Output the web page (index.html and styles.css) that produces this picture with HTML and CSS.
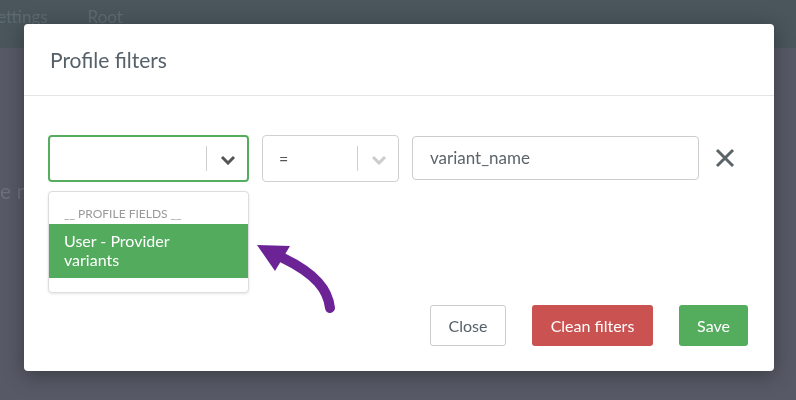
FILE: index.html
```html
<!DOCTYPE html>
<html lang="en">
<head>
    <meta charset="UTF-8">
    <meta name="viewport" content="width=device-width, initial-scale=1.0">
    <title>Profile filters</title>
    <link rel="stylesheet" href="styles.css">
</head>
<body>

    <div class="page">
        <div class="topbar">
            <span class="nav-item">Settings</span>
            <span class="nav-item">Root</span>
        </div>
        <div class="page-body">
            <p class="page-text">The new</p>
        </div>
    </div>

    <div class="overlay">
        <div class="modal">
            <div class="modal-header">
                <h4>Profile filters</h4>
            </div>
            <div class="modal-body">
                <div class="filter-row">
                    <div class="select select-field is-focused">
                        <div class="select-value"></div>
                        <span class="select-sep"></span>
                        <span class="select-arrow">
                            <svg width="16" height="10" viewBox="0 0 16 10"><path d="M2 2l6 6 6-6" fill="none" stroke="#555" stroke-width="3"/></svg>
                        </span>
                        <div class="menu">
                            <div class="menu-group">__ PROFILE FIELDS __</div>
                            <div class="menu-option is-selected">User - Provider variants</div>
                        </div>
                    </div>
                    <div class="select select-op">
                        <div class="select-value">=</div>
                        <span class="select-sep"></span>
                        <span class="select-arrow">
                            <svg width="16" height="10" viewBox="0 0 16 10"><path d="M2 2l6 6 6-6" fill="none" stroke="#ccc" stroke-width="3"/></svg>
                        </span>
                    </div>
                    <input type="text" class="value-input" value="variant_name">
                    <button class="remove" aria-label="Remove">
                        <svg width="20" height="20" viewBox="0 0 20 20"><path d="M2 2l16 16M18 2L2 18" stroke="#5b6469" stroke-width="3"/></svg>
                    </button>
                </div>

                <svg class="hint-arrow" width="100" height="90" viewBox="0 0 100 90">
                    <path d="M80 72C78 54 66 38 33 22" fill="none" stroke="#6b2396" stroke-width="10" stroke-linecap="round"/>
                    <path d="M7 9L40 10L25 35Z" fill="#6b2396"/>
                </svg>
            </div>
            <div class="modal-footer">
                <button class="btn btn-default">Close</button>
                <button class="btn btn-danger">Clean filters</button>
                <button class="btn btn-success">Save</button>
            </div>
        </div>
    </div>

</body>
</html>
```

FILE: styles.css
```css
body {
    margin: 0;
    font-family: Lato, "Open Sans", sans-serif;
    background-color: #575a66;
    height: 400px;
    overflow: hidden;
}
.page {
    height: 400px;
    display: flex;
    flex-direction: column;
}
.topbar {
    height: 48px;
    background-color: #4a565c;
    display: flex;
    gap: 40px;
    margin-left: -12px;
    align-items: flex-start;
}
.nav-item {
    color: #5d6a70;
    font-size: 17px;
    padding-top: 6px;
    filter: blur(0.6px);
}
.page-body {
    flex: 1;
    background-color: #575a66;
}
.page-text {
    margin: 130px 0 0 -24px;
    font-size: 21px;
    color: #6d707b;
    filter: blur(0.6px);
}
.overlay {
    position: fixed;
    inset: 0;
    padding: 24px 22px 0 24px;
}
.modal {
    position: relative;
    background: #fff;
    width: 750px;
    border-radius: 4px;
    box-shadow: 0 4px 20px rgba(0, 0, 0, 0.35);
}
.modal-header {
    height: 72px;
    border-bottom: 1px solid #e5e5e5;
    box-sizing: border-box;
    padding: 0 26px;
    display: flex;
    align-items: center;
}
.modal-header h4 {
    margin: 0;
    font-size: 21px;
    font-weight: normal;
    color: #56616a;
}
.modal-body {
    padding: 39px 24px 0 24px;
    height: 209px;
    box-sizing: border-box;
}
.filter-row {
    display: flex;
    align-items: center;
}
.select {
    position: relative;
    display: flex;
    align-items: center;
    height: 47px;
    box-sizing: border-box;
    border: 1px solid #d0d0d0;
    border-radius: 4px;
}
.select-field {
    width: 201px;
    margin-right: 13px;
}
.select-field.is-focused {
    border: 2px solid #57ad5f;
}
.select-op {
    width: 137px;
    margin-right: 13px;
}
.select-value {
    flex: 1;
    padding-left: 16px;
    font-size: 16px;
    color: #555;
}
.select-sep {
    width: 1px;
    height: 25px;
    background-color: #cfcfcf;
}
.select-arrow {
    box-sizing: border-box;
    width: 40px;
    display: flex;
    justify-content: center;
    padding: 2px 0 0 2px;
}
.menu {
    position: absolute;
    top: 54px;
    left: -2px;
    width: 201px;
    height: 102px;
    box-sizing: border-box;
    background: #fff;
    border: 1px solid #ddd;
    border-radius: 4px;
    box-shadow: 0 1px 3px rgba(0, 0, 0, 0.1);
    padding-top: 14px;
    z-index: 2;
}
.menu-group {
    font-size: 12px;
    color: #999;
    padding-left: 15px;
    height: 18px;
}
.menu-option {
    font-size: 16px;
    line-height: 19px;
    padding: 7px 40px 8px 15px;
    color: #fff;
    background-color: #53ac5e;
    height: 54px;
    box-sizing: border-box;
}
.value-input {
    width: 287px;
    height: 44px;
    box-sizing: border-box;
    border: 1px solid #ccc;
    border-radius: 4px;
    padding: 0 17px;
    font-family: Lato, "Open Sans", sans-serif;
    font-size: 17px;
    color: #5c646a;
    margin-top: -2px;
}
.remove {
    border: none;
    background: none;
    padding: 0;
    margin-left: 16px;
    margin-top: -2px;
    display: flex;
}
.hint-arrow {
    position: absolute;
    left: 226px;
    top: 212px;
}
.modal-footer {
    display: flex;
    justify-content: flex-end;
    gap: 26px;
    padding: 0 26px 25px 0;
}
.btn {
    font-family: Lato, "Open Sans", sans-serif;
    font-size: 16px;
    height: 41px;
    border-radius: 3px;
    border: 1px solid transparent;
    padding: 0 16px;
    cursor: pointer;
}
.btn-default {
    background: #fff;
    border-color: #ccc;
    color: #56616a;
    width: 76px;
}
.btn-danger {
    background-color: #ca5352;
    color: #fff;
    width: 121px;
}
.btn-success {
    background-color: #54ad5d;
    color: #fff;
    width: 69px;
}
```
